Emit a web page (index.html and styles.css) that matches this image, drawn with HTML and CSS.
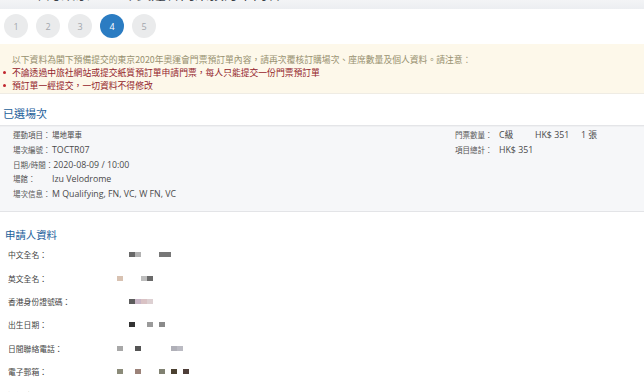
FILE: index.html
```html
<!DOCTYPE html>
<html lang="zh-Hant">
<head>
<meta charset="utf-8">
<title>門票預訂單</title>
<link rel="stylesheet" href="styles.css">
</head>
<body>
<div class="topbar">
  <div class="title"><span class="dot"></span><span class="title-text">確認東京2020年奧運會門票預訂單內容</span></div>
</div>

<div class="steps">
  <span class="step">1</span>
  <span class="step">2</span>
  <span class="step">3</span>
  <span class="step active">4</span>
  <span class="step">5</span>
</div>

<div class="notice">
  <p class="notice-intro">以下資料為閣下預備提交的東京2020年奧運會門票預訂單內容，請再次覆核訂購場次、座席數量及個人資料。請注意：</p>
  <ul class="notice-list">
    <li>不論透過中旅社網站或提交紙質預訂單申請門票，每人只能提交一份門票預訂單</li>
    <li>預訂單一經提交，一切資料不得修改</li>
  </ul>
</div>

<h2 class="sec-title sec1">已選場次</h2>
<div class="session">
  <div class="col-left">
    <div class="row"><span class="lbl">運動項目：</span><span class="val">場地單車</span></div>
    <div class="row"><span class="lbl">場次編號：</span><span class="val lat">TOCTR07</span></div>
    <div class="row"><span class="lbl">日期/時間：</span><span class="val lat">2020-08-09 / 10:00</span></div>
    <div class="row"><span class="lbl">場館：</span><span class="val lat">Izu Velodrome</span></div>
    <div class="row"><span class="lbl">場次信息：</span><span class="val lat">M Qualifying, FN, VC, W FN, VC</span></div>
  </div>
  <div class="col-right">
    <div class="rrow"><span class="rl">門票數量：</span><span class="val lat">C級</span><span class="val lat">HK$ 351</span><span class="val lat">1 張</span></div>
    <div class="rrow"><span class="rl">項目總計：</span><span class="val lat span3">HK$ 351</span></div>
  </div>
</div>

<h2 class="sec-title sec2">申請人資料</h2>
<div class="fields">
  <div class="frow"><span class="flbl">中文全名：</span>
    <span class="pix"><i></i><i></i><i class="c666"></i><i class="cb0"></i><i></i><i></i><i></i><i class="c777"></i><i class="c777"></i></span></div>
  <div class="frow"><span class="flbl">英文全名：</span>
    <span class="pix"><i class="ctan"></i><i></i><i></i><i></i><i class="cbc"></i><i class="c6a"></i></span></div>
  <div class="frow"><span class="flbl">香港身份證號碼：</span>
    <span class="pix"><i></i><i></i><i class="c5a"></i><i class="cpk1"></i><i class="cpk2"></i><i class="cpk3"></i></span></div>
  <div class="frow"><span class="flbl">出生日期：</span>
    <span class="pix"><i></i><i></i><i class="c333"></i><i></i><i></i><i class="c999"></i><i></i><i class="c888"></i></span></div>
  <div class="frow"><span class="flbl">日間聯絡電話：</span>
    <span class="pix"><i class="ca8"></i><i></i><i></i><i class="c555"></i><i></i><i></i><i></i><i></i><i></i><i class="cb0b"></i><i class="cb8b"></i></span></div>
  <div class="frow"><span class="flbl">電子郵箱：</span>
    <span class="pix"><i class="cg1"></i><i></i><i></i><i class="cr1"></i><i></i><i></i><i></i><i class="cg2"></i><i></i><i class="cd1"></i><i></i><i class="cd2"></i></span></div>
  <div class="frow"><span class="flbl">通訊地址：</span>
    <span class="pix"><i class="cb0"></i><i></i><i class="c999"></i><i></i><i class="cbc"></i><i></i><i></i><i></i><i></i><i></i><i></i><i class="c999"></i><i></i><i class="cb0"></i></span></div>
</div>
</body>
</html>
```

FILE: styles.css
```css
* { box-sizing: border-box; }
html, body { margin: 0; padding: 0; }
body {
  width: 644px;
  height: 392px;
  overflow: hidden;
  background: #ffffff;
  font-family: "Open Sans", "Noto Sans CJK TC", sans-serif;
  color: #444;
}

.topbar {
  height: 9px;
  overflow: hidden;
  background: linear-gradient(#f3f4f6, #eceef1);
}
.title {
  display: flex;
  align-items: center;
  gap: 18px;
  margin-top: -15px;
  padding-left: 3px;
  height: 16px;
}
.dot {
  width: 11px; height: 11px;
  border-radius: 50%;
  background: #2a72b5;
  flex: none;
}
.title-text {
  font-family: "Noto Sans CJK TC", sans-serif;
  font-size: 14.5px;
  line-height: 16px;
  color: #3a3f47;
}

.steps {
  display: flex;
  gap: 8px;
  padding: 5px 4px 0 4px;
}
.step {
  width: 24px; height: 24px;
  border-radius: 50%;
  background: #eaebec;
  color: #a3a7ad;
  font-size: 9px;
  display: flex;
  align-items: center;
  justify-content: center;
}
.step.active {
  background: #2b7cc2;
  color: #ffffff;
}

.notice {
  margin-top: 6px;
  background: #fdf8ea;
  padding: 9px 0 1px;
  border-bottom: 1px solid #efece4;
  font-family: "Noto Sans CJK TC", sans-serif;
  font-size: 8.8px;
  line-height: 13px;
}
.notice-intro {
  margin: 0;
  padding-left: 12px;
  color: #97906f;
}
.notice-list {
  list-style: none;
  margin: 0;
  padding: 0;
}
.notice-list li {
  display: flex;
  align-items: center;
  color: #93242a;
}
.notice-list li::before {
  content: "";
  width: 3px; height: 3px;
  border-radius: 50%;
  background: #c0262e;
  margin: 0 6px 0 3px;
  flex: none;
}

.sec-title {
  margin: 0;
  font-family: "Noto Sans CJK TC", sans-serif;
  font-weight: normal;
  line-height: 14px;
  color: #23609a;
}
.sec1 { font-size: 11px; margin-top: 12px; padding-left: 3px; }
.sec2 { font-size: 10.4px; margin-top: 16px; padding-left: 5px; }

.session {
  margin-top: 5px;
  display: flex;
  background: #f6f7f9;
  border-top: 1px solid #e4e5e8;
  border-bottom: 1px solid #e3e4e7;
  box-shadow: inset 0 1px 1px rgba(0,0,0,0.03);
  padding: 2px 0 9px;
  font-size: 7.5px;
  line-height: 14.8px;
  color: #4a4a4a;
}
.col-left { width: 455px; padding-left: 13px; }
.lbl { display: inline-block; min-width: 39px; color: #555; }
.val { color: #4a4a4a; }
.lat { font-size: 8.8px; }
.col-right { flex: 1; }
.rrow {
  display: grid;
  grid-template-columns: 44px 36px 46px auto;
  align-items: baseline;
}
.rl { color: #555; }
.span3 { grid-column: 2 / span 3; }

.fields {
  margin-top: 1px;
  font-size: 7.8px;
  color: #444;
}
.frow {
  display: flex;
  align-items: center;
  height: 23.4px;
  padding-left: 8px;
}
.flbl { width: 109px; flex: none; }
.pix {
  display: grid;
  grid-template-columns: repeat(14, 6px);
  height: 5px;
}
.pix i { display: block; height: 5px; }
.c666 { background: #686868; }
.cb0 { background: #b2b2b2; }
.c777 { background: #777777; }
.ctan { background: #d8c2b2; }
.cbc { background: #bdbdbd; }
.c6a { background: #6a6a6a; }
.c5a { background: #5c5c5c; }
.cpk1 { background: #c9b6c6; }
.cpk2 { background: #d9c2c4; }
.cpk3 { background: #ddd0d2; }
.c333 { background: #333333; }
.c999 { background: #9a9a9a; }
.c888 { background: #8a8a8a; }
.ca8 { background: #a8a8a8; }
.c555 { background: #555555; }
.cb0b { background: #b0b0b8; }
.cb8b { background: #bbbbc3; }
.cg1 { background: #8b8b79; }
.cr1 { background: #9b8279; }
.cg2 { background: #808171; }
.cd1 { background: #4b4131; }
.cd2 { background: #4e3e39; }
```
